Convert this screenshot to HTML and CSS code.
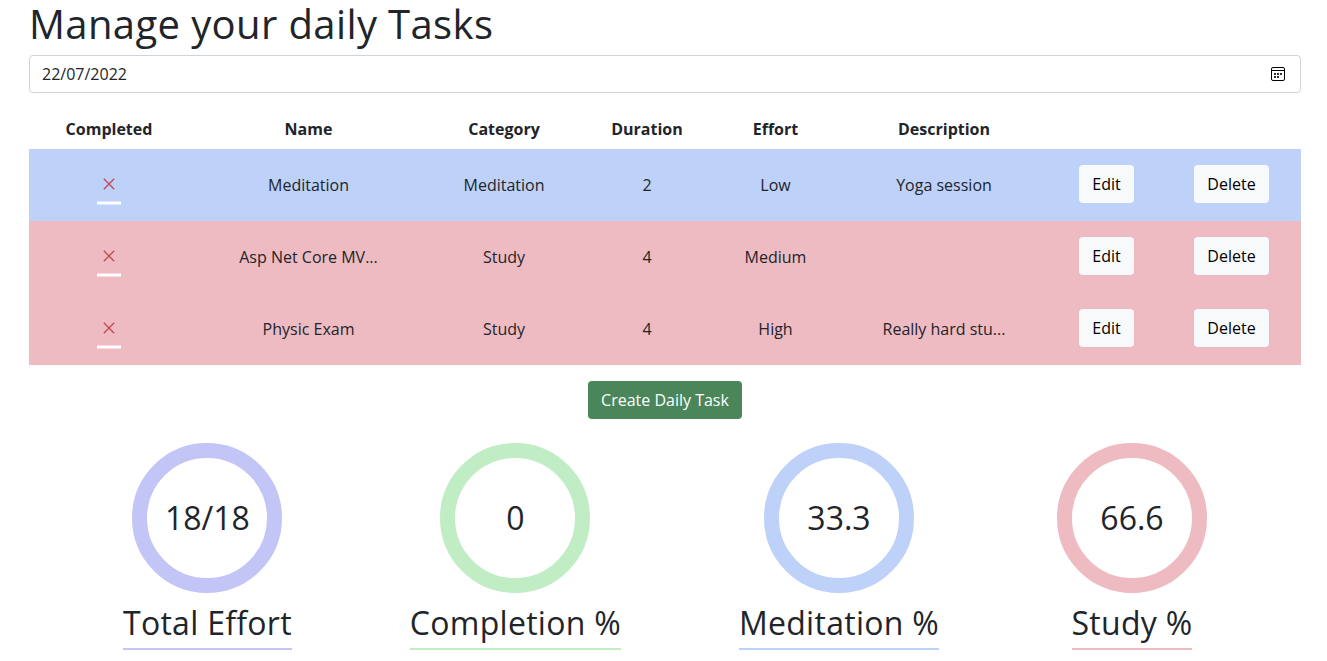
FILE: index.html
```html
<!DOCTYPE html>
<html lang="en">
<head>
<meta charset="utf-8">
<title>Daily Tasks</title>
<link rel="stylesheet" href="styles.css">
</head>
<body>
<main class="page">
  <h1 class="title">Manage your daily Tasks</h1>
  <div class="date-field">
    <span>22/07/2022</span>
    <svg class="calendar" width="14" height="14" viewBox="0 0 14 14" shape-rendering="crispEdges">
      <rect x=".5" y=".5" width="13" height="13" rx="1.5" fill="none" stroke="#000" shape-rendering="auto"/>
      <path d="M1 3h12v1H1z"/>
      <path fill="#333" d="M3 6h2v2H3zM6 6h2v2H6zM9 6h2v2H9zM3 9h2v2H3zM6 9h2v2H6z"/>
    </svg>
  </div>
  <table class="tasks">
    <colgroup><col class="c1"><col class="c2"><col class="c3"><col class="c4"><col class="c5"><col class="c6"><col class="c7"><col class="c8"></colgroup>
    <thead>
      <tr><th>Completed</th><th>Name</th><th>Category</th><th>Duration</th><th>Effort</th><th>Description</th><th></th><th></th></tr>
    </thead>
    <tbody>
      <tr class="blue">
        <td><svg class="mark" width="24" height="34" viewBox="0 0 24 34"><path class="cross" d="M6.8 6.8l10.4 10.4M17.2 6.8L6.8 17.2"/><path class="bar" d="M0 31h24"/></svg></td>
        <td>Meditation</td><td>Meditation</td><td>2</td><td>Low</td><td>Yoga session</td>
        <td><button class="btn">Edit</button></td><td><button class="btn">Delete</button></td>
      </tr>
      <tr class="pink">
        <td><svg class="mark" width="24" height="34" viewBox="0 0 24 34"><path class="cross" d="M6.8 6.8l10.4 10.4M17.2 6.8L6.8 17.2"/><path class="bar" d="M0 31h24"/></svg></td>
        <td>Asp Net Core MV...</td><td>Study</td><td>4</td><td>Medium</td><td></td>
        <td><button class="btn">Edit</button></td><td><button class="btn">Delete</button></td>
      </tr>
      <tr class="pink">
        <td><svg class="mark" width="24" height="34" viewBox="0 0 24 34"><path class="cross" d="M6.8 6.8l10.4 10.4M17.2 6.8L6.8 17.2"/><path class="bar" d="M0 31h24"/></svg></td>
        <td>Physic Exam</td><td>Study</td><td>4</td><td>High</td><td>Really hard stu...</td>
        <td><button class="btn">Edit</button></td><td><button class="btn">Delete</button></td>
      </tr>
    </tbody>
  </table>
  <div class="actions"><button class="btn create">Create Daily Task</button></div>
  <section class="stats">
    <div class="stat violet"><div class="ring">18/18</div><h2>Total Effort</h2></div>
    <div class="stat green"><div class="ring">0</div><h2>Completion %</h2></div>
    <div class="stat sky"><div class="ring">33.3</div><h2>Meditation %</h2></div>
    <div class="stat rose"><div class="ring">66.6</div><h2>Study %</h2></div>
  </section>
</main>
</body>
</html>
```
FILE: styles.css
```css
* { box-sizing: border-box; }
body { margin: 0; background: #fff; color: #212529; font: 16px/24px "Open Sans", "Noto Sans", sans-serif; }
.page { padding: 0 26px 0 29px; }
.title { margin: 0; height: 55px; font-size: 40px; line-height: 48px; font-weight: 400; letter-spacing: .38px; }
.date-field { display: flex; align-items: center; justify-content: space-between; height: 38px; padding: 0 15px 0 12px; border: 1px solid #ced4da; border-radius: 4px; }
.tasks { width: 1272px; margin-top: 16px; table-layout: fixed; border-collapse: collapse; text-align: center; }
.c1 { width: 160px; }
.c2 { width: 239px; }
.c3 { width: 152px; }
.c4 { width: 134px; }
.c5 { width: 123px; }
.c6 { width: 214px; }
.c7 { width: 111px; }
.c8 { width: 139px; }
.tasks th { height: 40px; padding: 0; font-weight: 700; }
.tasks td { height: 72px; padding: 0; vertical-align: middle; }
.blue { background: #bed1f9; }
.pink { background: #efbbc3; }
.mark { display: block; margin: 0 auto -8px; fill: none; }
.cross { stroke: #c34650; stroke-width: 1.3; }
.bar { stroke: #fff; stroke-width: 3; }
.btn { height: 38px; padding: 0 13px; border: 0; border-radius: 4px; background: #f8f9fa; color: #000; font: inherit; vertical-align: middle; }
.tasks .btn { display: block; margin: 0 auto 2px; }
.actions { padding: 16px 0 24px; text-align: center; line-height: 0; }
.create { background: #4a8659; color: #fff; line-height: 24px; }
.stats { display: flex; justify-content: space-between; padding: 0 94px; }
.stat { display: flex; flex-direction: column; align-items: center; }
.ring { display: flex; align-items: center; justify-content: center; width: 150px; height: 150px; border: 15px solid; border-color: var(--tone); border-radius: 50%; font-size: 32px; }
.stat h2 { margin: 11px 0 0; padding-bottom: 6px; border-bottom: 2px solid var(--tone); font-size: 32px; line-height: 38px; font-weight: 400; letter-spacing: .28px; white-space: nowrap; }
.violet { --tone: #c4c5f7; }
.green { --tone: #c0edc4; }
.sky { --tone: #bed1f9; }
.rose { --tone: #efbbc3; }
```
